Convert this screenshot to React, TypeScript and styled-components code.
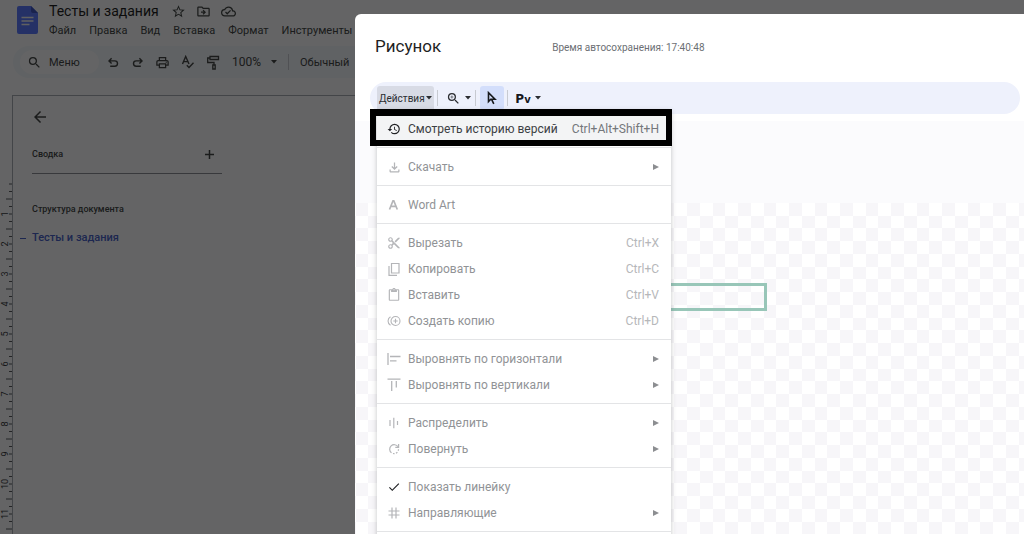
import React from "react";
import styled, { createGlobalStyle } from "styled-components";
import {
  MdStarBorder,
  MdOutlineDriveFileMove,
  MdOutlineCloudDone,
  MdSearch,
  MdOutlinePrint,
  MdArrowBack,
  MdZoomIn,
  MdHistory,
  MdOutlineFileDownload,
  MdContentCut,
  MdOutlineContentPaste,
  MdCheck,
} from "react-icons/md";

const GlobalStyle = createGlobalStyle`
  * { box-sizing: border-box; }
  body {
    margin: 0;
    font-family: Roboto, "Liberation Sans", sans-serif;
    background: #f9fbfd;
    overflow: hidden;
  }
  button { font: inherit; color: inherit; border: 0; background: none; padding: 0; margin: 0; }
  svg { display: block; flex: none; }
`;

/* Document page */

const Page = styled.div`
  display: flex;
  flex-direction: column;
  height: 100vh;
  color: #444746;
  overflow: hidden;
`;

const Header = styled.header`
  display: flex;
  gap: 11px;
  padding-left: 17px;
  height: 40px;
`;

const LogoBox = styled.div`
  padding-top: 6px;
`;

const HeaderText = styled.div`
  display: flex;
  flex-direction: column;
`;

const TitleRow = styled.div`
  display: flex;
  align-items: center;
  height: 22px;
  gap: 10px;
`;

const Title = styled.h1`
  margin: 0 2px 0 0;
  font-size: 14px;
  line-height: 22px;
  font-weight: 400;
  color: #1f1f1f;
  white-space: nowrap;
`;

const MenuBar = styled.nav`
  display: flex;
  gap: 13px;
  font-size: 11px;
  line-height: 18px;
`;

const MenuBarButton = styled.button`
  white-space: nowrap;
`;

const DocToolbar = styled.div`
  display: flex;
  align-items: center;
  height: 32px;
  margin: 6px 12px 0 13px;
  padding-left: 7px;
  border-radius: 16px;
  background: #f0f4f9;
  flex: none;
`;

const SearchPill = styled.button`
  display: flex;
  align-items: center;
  gap: 7px;
  width: 79px;
  height: 24px;
  padding-left: 7px;
  border-radius: 12px;
  background: #fafbfd;
  font-size: 11px;
`;

const ToolButton = styled.button`
  display: flex;
  align-items: center;
  justify-content: center;
  width: 25px;
  height: 24px;
`;

const ToolGroup = styled.div`
  display: flex;
  padding-left: 1px;
`;

const ZoomSelect = styled.button`
  display: flex;
  align-items: center;
  gap: 10px;
  margin-left: 7px;
  font-size: 12px;
`;

const Divider = styled.span<{ $gap: number }>`
  width: 1px;
  height: 16px;
  margin: 0 ${(p) => p.$gap}px;
  background: #c7cad1;
`;

const StyleButton = styled.button`
  font-size: 11px;
  white-space: nowrap;
`;

const Workspace = styled.div`
  display: flex;
  flex: 1;
  min-height: 0;
  margin-top: 17px;
`;

const RulerColumn = styled.div`
  width: 13px;
  flex: none;
  padding-top: 88px;
`;

const Outline = styled.aside`
  flex: 1;
  border-top: 1px solid #a9acb4;
  border-left: 1px solid #a9acb4;
  margin-left: -1px;
  padding: 12px 0 0 18px;
`;

const SummaryRow = styled.div`
  display: flex;
  align-items: center;
  justify-content: space-between;
  width: 190px;
  height: 39px;
  margin: 5px 0 0 1px;
  padding-right: 8px;
  border-bottom: 1px solid #8d9096;
`;

const SideHeading = styled.h2`
  margin: 0;
  font-size: 9px;
  line-height: 12px;
  font-weight: 500;
`;

const StructureHeading = styled(SideHeading)`
  margin: 29px 0 0 1px;
`;

const OutlineLink = styled.a`
  display: flex;
  align-items: center;
  gap: 6px;
  margin: 15px 0 0 -11px;
  font-size: 11px;
  line-height: 16px;
  font-weight: 500;
  color: #4a62c8;
  text-decoration: none;

  &::before {
    content: "";
    width: 6px;
    height: 1px;
    background: currentColor;
  }
`;

/* Dialog */

const Backdrop = styled.div`
  position: fixed;
  inset: 0;
  display: flex;
  padding: 14px 0 0 355px;
  background: rgba(0, 0, 0, 0.6);
`;

const Dialog = styled.section`
  display: flex;
  flex-direction: column;
  flex: 1;
  min-width: 0;
  border-radius: 6px 0 0 0;
  background: #fff;
`;

const DialogHeader = styled.header`
  display: flex;
  align-items: center;
  gap: 111px;
  height: 68px;
  padding: 0 0 4px 20px;
`;

const DialogTitle = styled.h2`
  margin: 0;
  font-size: 17px;
  line-height: 24px;
  font-weight: 400;
  color: #1f1f1f;
`;

const SaveTime = styled.span`
  padding-top: 4px;
  font-size: 10px;
  line-height: 12px;
  color: #6c6f74;
  white-space: nowrap;
`;

const DrawToolbar = styled.div`
  position: relative;
  z-index: 1;
  display: flex;
  align-items: center;
  height: 32px;
  margin: 0 4px 0 15px;
  padding-left: 7px;
  border-radius: 16px;
  background: #eef1fc;
  color: #2b2d31;
`;

const ActionsButton = styled.button`
  display: flex;
  align-items: center;
  justify-content: space-between;
  width: 57px;
  height: 24px;
  padding: 0 2px;
  border-radius: 3px 3px 0 0;
  background: #d8dbe5;
  font-size: 10px;
  white-space: nowrap;
`;

const IconButton = styled.button<{ $active?: boolean }>`
  display: flex;
  align-items: center;
  justify-content: center;
  width: 24px;
  height: 24px;
  border-radius: 3px;
  background: ${(p) => (p.$active ? "#d3defb" : "transparent")};
`;

const ScriptIcon = styled.span`
  padding-top: 3px;
  font-family: "DejaVu Sans", sans-serif;
  font-size: 12px;
  line-height: 16px;
  font-weight: 700;
  color: #16181d;

  small {
    font-size: 10px;
  }
`;

const Canvas = styled.div`
  position: relative;
  display: flex;
  flex-direction: column;
  flex: 1;
  min-height: 0;
  margin-top: 7px;
  padding-top: 82px;
  background: #fbfbfd;
`;

const Shape = styled.div`
  position: absolute;
  left: 160px;
  top: 162px;
  width: 252px;
  height: 28px;
  border: 3px solid #98c6b8;
`;

/* Actions menu */

const Menu = styled.div`
  position: absolute;
  top: 28px;
  left: 7px;
  width: 294px;
  padding-bottom: 12px;
  background: #fff;
  box-shadow: 0 1px 5px rgba(60, 64, 67, 0.3);
`;

const MenuGroup = styled.div`
  padding: 6px 0 5px;
  border-bottom: 1px solid #e3e4e6;
`;

const MenuItem = styled.button<{ $enabled?: boolean }>`
  display: flex;
  align-items: center;
  width: 100%;
  height: 26px;
  padding: 0 12px 0 10px;
  font-size: 12px;
  line-height: 16px;
  text-align: left;
  color: ${(p) => (p.$enabled ? "#3c4043" : "#919396")};
  background: ${(p) => (p.$enabled ? "#f3f4f5" : "transparent")};
`;

const ItemIcon = styled.span<{ $dark?: boolean }>`
  display: flex;
  justify-content: center;
  width: 14px;
  margin-right: 7px;
  color: ${(p) => (p.$dark ? "#202124" : "#b4b5b8")};
`;

const ItemLabel = styled.span`
  flex: 1;
  white-space: nowrap;
`;

const Shortcut = styled.kbd<{ $enabled?: boolean }>`
  font-family: inherit;
  font-size: 12px;
  color: ${(p) => (p.$enabled ? "#74777b" : "#b6b7ba")};
`;

const Submenu = styled.span`
  display: flex;
  color: #8c8e91;
`;

const Highlight = styled.div`
  position: absolute;
  top: -1px;
  left: -7px;
  width: 302px;
  height: 37px;
  border: 6px solid #000;
  border-top-width: 7px;
  pointer-events: none;
`;

/* Drawings */

const Caret = () => (
  <svg width="6" height="4" viewBox="0 0 6 4" fill="currentColor">
    <path d="M0 0h6L3 3.500z" />
  </svg>
);

const SubmenuArrow = () => (
  <svg width="6" height="6" viewBox="0 0 6 6" fill="currentColor">
    <path d="M0 0l6 3-6 3z" />
  </svg>
);

const PlusIcon = () => (
  <svg width="9" height="9" viewBox="0 0 9 9" fill="none" stroke="currentColor" strokeWidth="1.500">
    <path d="M4.500 0v9M0 4.500h9" />
  </svg>
);

const DocsLogo = () => (
  <svg width="21" height="28" viewBox="0 0 21 28">
    <path d="M2 0h12l7 7v19a2 2 0 0 1-2 2H2a2 2 0 0 1-2-2V2a2 2 0 0 1 2-2z" fill="#5c7cff" />
    <path d="M14 0l7 7h-5a2 2 0 0 1-2-2z" fill="#3f55c0" />
    <path d="M4.500 11.500h12M4.500 15h12M4.500 18.500h8" stroke="#f1f1f1" strokeWidth="1.400" />
  </svg>
);

const UndoIcon = ({ flip }: { flip?: boolean }) => (
  <svg width="12" height="14" viewBox="0 0 12 14" fill="none" stroke="currentColor" strokeWidth="1.400">
    <g transform={flip ? "matrix(-1 0 0 1 12 0)" : undefined}>
      <path d="M4.600 3.300L2 5.900l2.600 2.600M2.200 5.900h5.600a2.700 2.700 0 0 1 0 5.400H3.200" />
    </g>
  </svg>
);

const SpellIcon = () => (
  <svg width="14" height="14" viewBox="0 0 14 14" fill="none" stroke="currentColor" strokeWidth="1.400">
    <path d="M1.500 9L4.700 1.500 8 9M2.800 6.600h4M5.800 10.200l2.200 2.200 4.500-4.600" />
  </svg>
);

const RollerIcon = () => (
  <svg width="14" height="15" viewBox="0 0 14 15" fill="none" stroke="currentColor" strokeWidth="1.300">
    <path d="M4 1.500h8.500v3H4zM4 3H1.700v4.500H8V10M6.800 10h2.400v4H6.800z" />
  </svg>
);

const CursorIcon = () => (
  <svg width="12" height="14" viewBox="0 0 12 14" fill="none" stroke="#16181d" strokeWidth="1.600">
    <path d="M2.500 1.700v8.800l2.300-2.300h4.200zM5.600 8.400l2.200 4.400" />
  </svg>
);

const CopyIcon = () => (
  <svg width="14" height="14" viewBox="0 0 14 14" fill="none" stroke="currentColor" strokeWidth="1.200">
    <path d="M4.500 1.500h7.500v9.500h-7.500zM2 4v9.300h8" />
  </svg>
);

const DuplicateIcon = () => (
  <svg width="14" height="12" viewBox="0 0 14 12" fill="none" stroke="currentColor" strokeWidth="1.100">
    <circle cx="8.500" cy="6" r="4.500" />
    <path d="M8.500 3.800v4.400M6.300 6h4.400M3.500 1.700a5 5 0 0 0 0 8.600" />
  </svg>
);

const AlignLeftIcon = () => (
  <svg width="14" height="14" viewBox="0 0 14 14" fill="none" stroke="currentColor" strokeWidth="1.300">
    <path d="M1 1v12M3 4.500h10.500M3 8.800h6.500" />
  </svg>
);

const AlignTopIcon = () => (
  <svg width="14" height="14" viewBox="0 0 14 14" fill="none" stroke="currentColor" strokeWidth="1.300">
    <path d="M.5 1.200h13M4.700 3v10M9.300 3v6.500" />
  </svg>
);

const DistributeIcon = () => (
  <svg width="12" height="12" viewBox="0 0 12 12" fill="none" stroke="currentColor" strokeWidth="1.200">
    <path d="M2 3v6M5.800 .8v10.400M9.500 4v4" />
  </svg>
);

const RotateIcon = () => (
  <svg width="12" height="12" viewBox="0 0 12 12" fill="none" stroke="currentColor" strokeWidth="1.200">
    <path d="M10 3.800A4.500 4.500 0 1 0 3.500 9.800" />
    <path d="M10.600 1v3.300H7.300" />
    <path d="M5 10.500a4.500 4.500 0 0 0 5.500-4.500" strokeDasharray="1.600 1.400" />
  </svg>
);

const GuidesIcon = () => (
  <svg width="12" height="12" viewBox="0 0 12 12" fill="none" stroke="currentColor" strokeWidth="1.200">
    <path d="M4 .5v11M8 .5v11M.5 4h11M.5 8h11" />
  </svg>
);

const WordArtIcon = () => (
  <svg width="12" height="12" viewBox="0 0 12 12" fill="none" stroke="currentColor" strokeWidth="1.700">
    <path d="M1.500 10.500L5 1.800h.8l3.500 8.700M3 7.400h4.800" />
  </svg>
);

const Ruler = () => {
  const ticks = Array.from({ length: 47 }, (_, i) => i);
  const numbers = Array.from({ length: 11 }, (_, i) => i + 1);
  return (
    <svg width="13" height="350" viewBox="0 0 13 350" stroke="#5a5c60" fill="#3a3c3f">
      <path d="M12.500 0v350" />
      {ticks.map((i) => (
        <path key={i} d={`M${i % 4 === 2 ? 6 : 9} ${1 + i * 7.5}H12`} />
      ))}
      {numbers.map((n) => (
        <text
          key={n}
          stroke="none"
          fontSize="9"
          textAnchor="middle"
          transform={`translate(8 ${1 + n * 30}) rotate(-90)`}
        >
          {n}
        </text>
      ))}
    </svg>
  );
};

const Checkerboard = () => (
  <svg width="100%" height="100%">
    <defs>
      <pattern id="checks" width="51" height="51" x="-25" y="0" patternUnits="userSpaceOnUse">
        <rect width="51" height="51" fill="#fff" />
        <path
          fill="#f7f6f9"
          d="M0 0h13v13H0zM26 0h12v13H26zM13 13h13v12H13zM38 13h13v12H38zM0 25h13v13H0zM26 25h12v13H26zM13 38h13v13H13zM38 38h13v13H38z"
        />
      </pattern>
    </defs>
    <rect width="100%" height="100%" fill="url(#checks)" />
  </svg>
);

type Item = {
  label: string;
  icon: React.ReactNode;
  shortcut?: string;
  submenu?: boolean;
  enabled?: boolean;
  checked?: boolean;
};

const groups: Item[][] = [
  [{ label: "Смотреть историю версий", icon: <MdHistory size={14} />, shortcut: "Ctrl+Alt+Shift+H", enabled: true }],
  [{ label: "Скачать", icon: <MdOutlineFileDownload size={15} />, submenu: true }],
  [{ label: "Word Art", icon: <WordArtIcon /> }],
  [
    { label: "Вырезать", icon: <MdContentCut size={14} />, shortcut: "Ctrl+X" },
    { label: "Копировать", icon: <CopyIcon />, shortcut: "Ctrl+C" },
    { label: "Вставить", icon: <MdOutlineContentPaste size={14} />, shortcut: "Ctrl+V" },
    { label: "Создать копию", icon: <DuplicateIcon />, shortcut: "Ctrl+D" },
  ],
  [
    { label: "Выровнять по горизонтали", icon: <AlignLeftIcon />, submenu: true },
    { label: "Выровнять по вертикали", icon: <AlignTopIcon />, submenu: true },
  ],
  [
    { label: "Распределить", icon: <DistributeIcon />, submenu: true },
    { label: "Повернуть", icon: <RotateIcon />, submenu: true },
  ],
  [
    { label: "Показать линейку", icon: <MdCheck size={14} />, checked: true },
    { label: "Направляющие", icon: <GuidesIcon />, submenu: true },
  ],
];

const menuNames = ["Файл", "Правка", "Вид", "Вставка", "Формат", "Инструменты"];

const ActionsMenu = () => (
  <Menu role="menu">
    {groups.map((items, index) => (
      <MenuGroup key={index}>
        {items.map((item) => (
          <MenuItem key={item.label} role="menuitem" $enabled={item.enabled}>
            <ItemIcon $dark={item.enabled || item.checked}>{item.icon}</ItemIcon>
            <ItemLabel>{item.label}</ItemLabel>
            {item.shortcut && <Shortcut $enabled={item.enabled}>{item.shortcut}</Shortcut>}
            {item.submenu && (
              <Submenu>
                <SubmenuArrow />
              </Submenu>
            )}
          </MenuItem>
        ))}
      </MenuGroup>
    ))}
    <Highlight />
  </Menu>
);

export default function App() {
  return (
    <>
      <GlobalStyle />
      <Page>
        <Header>
          <LogoBox>
            <DocsLogo />
          </LogoBox>
          <HeaderText>
            <TitleRow>
              <Title>Тесты и задания</Title>
              <MdStarBorder size={15} />
              <MdOutlineDriveFileMove size={15} />
              <MdOutlineCloudDone size={15} />
            </TitleRow>
            <MenuBar>
              {menuNames.map((name) => (
                <MenuBarButton key={name}>{name}</MenuBarButton>
              ))}
            </MenuBar>
          </HeaderText>
        </Header>
        <DocToolbar>
          <SearchPill>
            <MdSearch size={15} />
            Меню
          </SearchPill>
          <ToolGroup>
            <ToolButton aria-label="Отменить"><UndoIcon /></ToolButton>
            <ToolButton aria-label="Повторить"><UndoIcon flip /></ToolButton>
            <ToolButton aria-label="Печать"><MdOutlinePrint size={15} /></ToolButton>
            <ToolButton aria-label="Правописание"><SpellIcon /></ToolButton>
            <ToolButton aria-label="Копировать форматирование"><RollerIcon /></ToolButton>
          </ToolGroup>
          <ZoomSelect>
            100%
            <Caret />
          </ZoomSelect>
          <Divider $gap={11} />
          <StyleButton>Обычный</StyleButton>
        </DocToolbar>
        <Workspace>
          <RulerColumn>
            <Ruler />
          </RulerColumn>
          <Outline>
            <button aria-label="Назад"><MdArrowBack size={18} /></button>
            <SummaryRow>
              <SideHeading>Сводка</SideHeading>
              <button aria-label="Добавить сводку"><PlusIcon /></button>
            </SummaryRow>
            <StructureHeading>Структура документа</StructureHeading>
            <OutlineLink href="#doc">Тесты и задания</OutlineLink>
          </Outline>
        </Workspace>
      </Page>
      <Backdrop>
        <Dialog role="dialog" aria-label="Рисунок">
          <DialogHeader>
            <DialogTitle>Рисунок</DialogTitle>
            <SaveTime>Время автосохранения: 17:40:48</SaveTime>
          </DialogHeader>
          <DrawToolbar>
            <ActionsButton aria-haspopup="menu" aria-expanded="true">
              Действия
              <Caret />
            </ActionsButton>
            <Divider $gap={3} />
            <IconButton aria-label="Масштаб"><MdZoomIn size={15} /></IconButton>
            <Caret />
            <Divider $gap={4} />
            <IconButton $active aria-label="Выбрать"><CursorIcon /></IconButton>
            <Divider $gap={3} />
            <IconButton aria-label="Линия"><ScriptIcon>P<small>v</small></ScriptIcon></IconButton>
            <Caret />
            <ActionsMenu />
          </DrawToolbar>
          <Canvas>
            <Checkerboard />
            <Shape />
          </Canvas>
        </Dialog>
      </Backdrop>
    </>
  );
}
